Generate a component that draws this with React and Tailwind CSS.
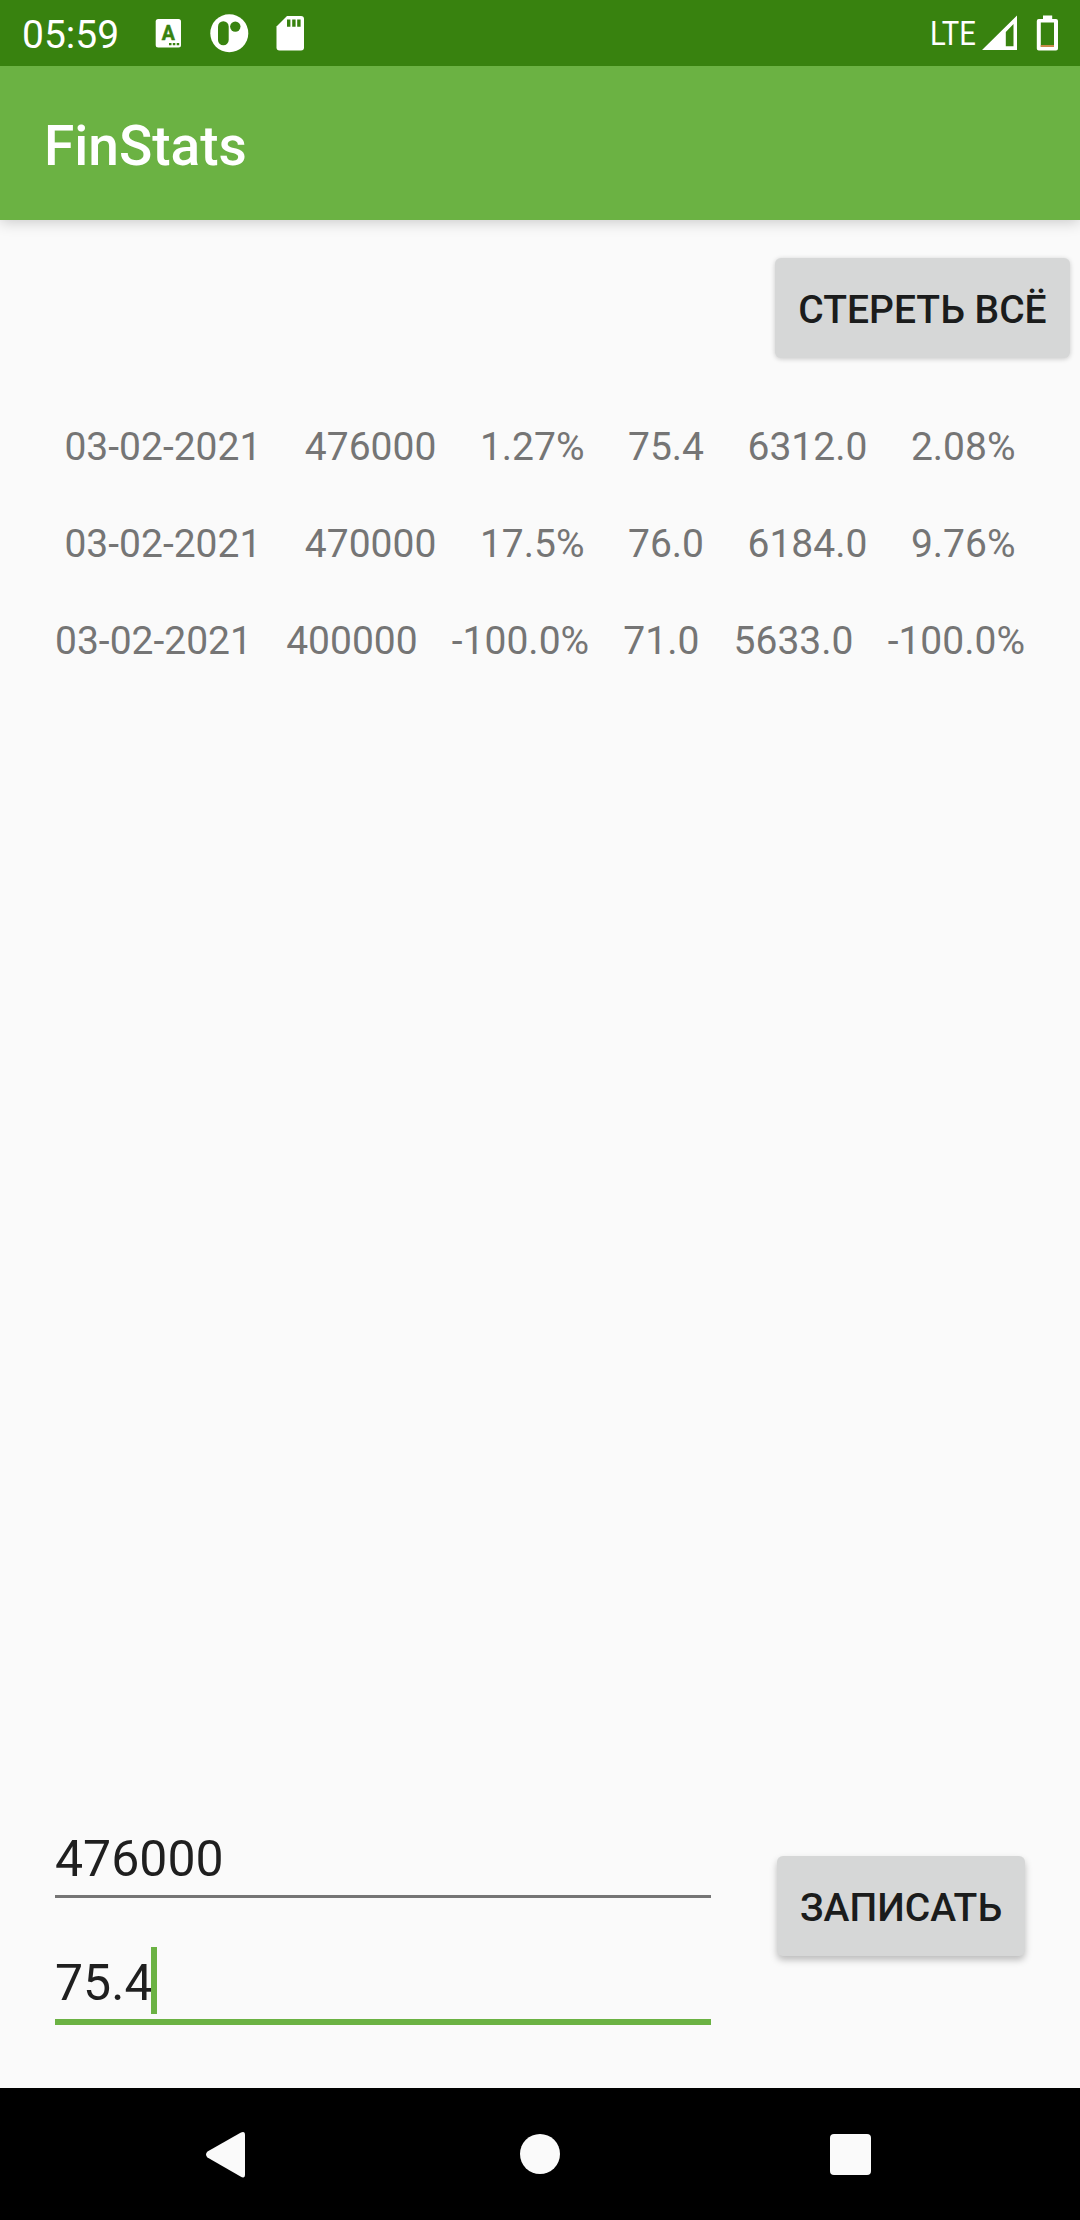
import React from 'react'

const records = [
    { cells: ['03-02-2021', '476000', '1.27%', '75.4', '6312.0', '2.08%'] },
    { cells: ['03-02-2021', '470000', '17.5%', '76.0', '6184.0', '9.76%'] },
    { cells: ['03-02-2021', '400000', '-100.0%', '71.0', '5633.0', '-100.0%'], tight: true },
]

function StatusBar() {
    return (
        <div className="relative z-10 flex h-[66px] justify-between bg-[#38820f] text-white">
            <div className="flex">
                <span className="ml-[22px] mt-3 w-[130px] text-[39px] leading-[46px]">05:59</span>
                <svg width="160" height="66" viewBox="152 0 160 66" fill="#fff">
                    <rect x="155.7" y="19" width="25.3" height="28.5" rx="2.5" />
                    <text x="168.4" y="39.6" textAnchor="middle" fontSize="19.5" fontWeight="700" fill="#38820f" stroke="#38820f" strokeWidth="0.5">A</text>
                    <path fill="#38820f" d="M169 43h2.5v2.3H169zM172.8 43h2.5v2.3h-2.5zM176.7 43h2.5v2.3h-2.5z" />
                    <circle cx="229.3" cy="33.2" r="19" />
                    <rect x="218" y="21.3" width="10.7" height="24" rx="5.3" fill="#38820f" />
                    <circle cx="235.3" cy="26.6" r="5.2" fill="#38820f" />
                    <path d="M287 16h14a3 3 0 0 1 3 3v28.500a3 3 0 0 1-3 3h-21.500a3 3 0 0 1-3-3V26.500z" />
                    <path fill="#38820f" d="M287 19.500h3.400v7.200H287zM292.200 19.500h3.400v7.200h-3.400zM297.200 19.500h3.400v7.200h-3.400z" />
                </svg>
            </div>
            <div className="flex">
                <span className="mt-[13px] w-[50px] origin-left scale-x-[0.86] text-[34px] leading-[40px]">LTE</span>
                <svg width="100" height="66" viewBox="980 0 100 66" fill="#fff">
                    <path fillRule="evenodd" d="M982 50L1017 15.500V50zM1005.800 32v14.200h7.700V24z" />
                    <path fillRule="evenodd" d="M1043 15.500h9.200V19h3.800a2 2 0 0 1 2 2v27.500a2 2 0 0 1-2 2h-17.200a2 2 0 0 1-2-2V21a2 2 0 0 1 2-2h4.200zM1040.800 22.500v24.500h13.200V22.500z" />
                    <rect x="1040.800" y="45" width="13.200" height="2" fill="#c98a4b" />
                </svg>
            </div>
        </div>
    )
}

function Button({ children, className }) {
    return (
        <button className={`h-[100px] shrink-0 rounded-[6px] bg-[#d6d7d7] pt-1 text-[39px] font-medium leading-[46px] text-[#1b1c1c] ${className}`}>
            {children}
        </button>
    )
}

function NavBar() {
    return (
        <div className="flex h-[132px] bg-black">
            <svg width="1080" height="132" viewBox="0 0 1080 132" fill="#fafafa">
                <path d="M207.500 63.500L240.500 44.800Q245 42.500 245 47V86.500Q245 91 240.500 88.500L207.500 69.500Q204.500 66.500 207.500 63.500z" />
                <circle cx="540" cy="66" r="20" />
                <rect x="830" y="46" width="41" height="41" rx="4" />
            </svg>
        </div>
    )
}

export default function App() {
    return (
        <div className="flex h-[2220px] w-[1080px] flex-col overflow-hidden bg-[#fafafa] font-[Roboto,sans-serif]">
            <StatusBar />
            <header className="h-[154px] bg-[#6bb243] pl-11 pt-12 shadow-[0_2px_14px_rgba(0,0,0,0.2)]">
                <h1 className="text-[55px] font-medium leading-[64px] text-white">FinStats</h1>
            </header>

            <main className="flex grow flex-col">
                <div className="flex justify-end pr-[10px] pt-[38px]">
                    <Button className="w-[295px] shadow-[0_1px_5px_rgba(0,0,0,0.2)]">СТЕРЕТЬ ВСЁ</Button>
                </div>

                <div className="mt-[66px] flex flex-col gap-[51px] text-[39px] leading-[46px] text-[#757575]">
                    {records.map((record, i) => (
                        <div key={i} className={`flex justify-center whitespace-nowrap ${record.tight ? 'gap-[34.2px]' : 'gap-[43.5px]'}`}>
                            {record.cells.map((cell, j) => (
                                <span key={j}>{cell}</span>
                            ))}
                        </div>
                    ))}
                </div>

                <div className="mb-[63px] mt-auto flex px-[55px]">
                    <div className="w-[656px] text-[50px] text-[#1f1f1f]">
                        <div className="h-[68px] border-b-[3px] border-[#757575] leading-[58px]">476000</div>
                        <div className="mt-[49px] flex h-[78px] border-b-[6px] border-[#6bb243]">
                            <span className="mt-[7px] leading-[58px]">75.4</span>
                            <span className="-ml-[2px] h-[67px] w-[6px] bg-[#6bb243]"></span>
                        </div>
                    </div>
                    <Button className="ml-[66px] mt-[26px] w-[248px] shadow-[0_4px_7px_rgba(0,0,0,0.25)]">ЗАПИСАТЬ</Button>
                </div>
            </main>

            <NavBar />
        </div>
    )
}
